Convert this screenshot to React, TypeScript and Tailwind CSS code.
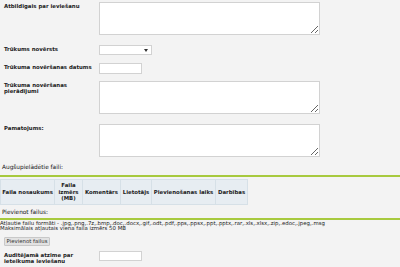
import React from "react";

const Label = ({ children }: { children: React.ReactNode }) => (
  <div className="w-[99px] shrink-0 pl-[4px] pr-[4px] text-[5.4px] leading-[6px] font-bold text-[#222]">
    {children}
  </div>
);

const TA = () => (
  <textarea className="block w-[221px] h-[33px] bg-white border border-[#d2d2d2] outline-none" />
);

export default function App() {
  const th =
    "border border-[#d6e0e7] bg-[#e7edf2] px-[1px] text-center align-middle font-bold text-[5.4px] leading-[6.6px] text-[#222] whitespace-nowrap";
  return (
    <div className="w-[400px] h-[267px] overflow-hidden bg-[#f3f3f3] text-[#222] font-['DejaVu_Sans',sans-serif]">
      <div className="pt-[2px]">
        <div className="flex items-start">
          <Label>
            <div className="pt-[0.5px]">Atbildīgais par ieviešanu</div>
          </Label>
          <TA />
        </div>
        <div className="flex items-start mt-[10px]">
          <Label>
            <div className="pt-[0.5px]">Trūkums novērsts</div>
          </Label>
          <div className="relative w-[53px] h-[10px] bg-white border border-[#d2d2d2]">
            <svg className="absolute right-[3px] top-[3px]" width="4" height="3" viewBox="0 0 4 3">
              <path d="M0 0 L4 0 L2 3 Z" fill="#333" />
            </svg>
          </div>
        </div>
        <div className="flex items-start mt-[8px]">
          <Label>
            <div className="pt-[0.5px]">Trūkuma novēršanas datums</div>
          </Label>
          <div className="w-[43px] h-[11px] bg-white border border-[#d2d2d2]" />
        </div>
        <div className="flex items-start mt-[7px]">
          <Label>
            <div className="pt-[0.5px]">Trūkuma novēršanas pierādījumi</div>
          </Label>
          <TA />
        </div>
        <div className="flex items-start mt-[10px]">
          <Label>
            <div className="pt-[0.5px]">Pamatojums:</div>
          </Label>
          <TA />
        </div>

        <div className="mt-[7px] pl-[2px] text-[5.8px] leading-[7px] text-[#111]">
          Augšupielādētie faili:
        </div>
        <div className="mt-[4px] h-[2px] bg-[#a7c93e]" />
        <table className="mt-[2px] border-collapse">
          <thead>
            <tr className="h-[25px]">
              <th className={`${th} w-[54px]`}>Faila nosaukums</th>
              <th className={`${th} w-[28px]`}>
                Faila
                <br />
                izmērs
                <br />
                (MB)
              </th>
              <th className={`${th} w-[38px]`}>Komentārs</th>
              <th className={`${th} w-[31px]`}>Lietotājs</th>
              <th className={`${th} w-[64px]`}>Pievienošanas laiks</th>
              <th className={`${th} w-[32px]`}>Darbības</th>
            </tr>
          </thead>
        </table>
        <div className="mt-[4px] pl-[2px] text-[5.8px] leading-[7px] text-[#111]">
          Pievienot failus:
        </div>
        <div className="mt-[2px] h-[2px] bg-[#a7c93e]" />
        <div className="mt-[1px] text-[5.4px] leading-[4.5px] text-[#222] whitespace-nowrap">
          <div>
            Atļautie failu formāti - .jpg,.png,.7z,.bmp,.doc,.docx,.gif,.odt,.pdf,.pps,.ppsx,.ppt,.pptx,.rar,.xls,.xlsx,.zip,.edoc,.jpeg,.msg
          </div>
          <div>Maksimālais atļautais viena faila izmērs 50 MB</div>
        </div>
        <div className="mt-[7px] ml-[4px] w-[46px] h-[9px] flex items-center justify-center border border-[#c8c8c8] bg-[#e2e2e2] text-[5.4px] text-[#333] rounded-[1px]">
          Pievienot failus
        </div>
        <div className="flex items-start mt-[5px]">
          <Label>
            <div className="pt-[0.5px]">Auditējamā atzīme par ieteikuma ieviešanu</div>
          </Label>
          <div className="w-[43px] h-[10px] bg-white border border-[#d2d2d2]" />
        </div>
      </div>
    </div>
  );
}
